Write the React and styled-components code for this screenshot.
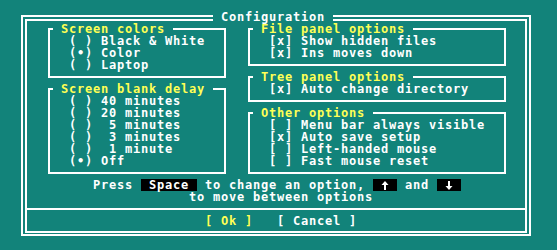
import styled, { createGlobalStyle } from 'styled-components';

const TEAL = '#12837a';
const YELLOW = '#ffff55';

const GlobalStyle = createGlobalStyle`
  html, body {
    margin: 0;
    padding: 0;
    background: ${TEAL};
  }
  body {
    width: 557px;
    height: 250px;
    overflow: hidden;
  }
`;

const Screen = styled.div`
  width: 557px;
  height: 250px;
  box-sizing: border-box;
  padding: 11px 0 0 21px;
  font-family: "DejaVu Sans Mono", "Liberation Mono", monospace;
  font-weight: bold;
  font-size: 12px;
  letter-spacing: 0.775px;
  line-height: 12px;
  color: #fff;
`;

const Dialog = styled.fieldset`
  margin: 0;
  padding: 0;
  min-width: 0;
  width: 510px;
  box-sizing: border-box;
  border: 6px double #fff;
  border-bottom-width: 5px;
`;

const DialogTitle = styled.legend`
  margin-left: 186px;
  padding: 0 8px 2px;
  line-height: 12px;
  white-space: pre;
`;

const DialogBody = styled.div`
  margin-top: -2px;
  padding-bottom: 4px;
`;

const Panels = styled.div`
  display: flex;
  gap: 22px;
  padding: 0 19px 0 21px;
`;

const Column = styled.div`
  display: flex;
  flex-direction: column;
  gap: 5px;
  width: ${p => p.$width}px;
`;

const Box = styled.fieldset`
  margin: 0;
  padding: 0;
  min-width: 0;
  box-sizing: border-box;
  border: 2px solid #fff;
`;

const BoxTitle = styled.legend`
  margin-left: 3px;
  padding: 0 8px;
  line-height: 12px;
  color: ${YELLOW};
  white-space: pre;
`;

const BoxBody = styled.div`
  padding: 0 0 5px 19px;
`;

const Line = styled.div`
  height: 12px;
  white-space: pre;
`;

const Hints = styled.div`
  margin-top: 5px;
`;

const Hint = styled.div`
  display: flex;
  align-items: flex-start;
  height: 12px;
  padding-left: ${p => p.$indent}px;
  white-space: pre;
`;

const Key = styled.span`
  display: inline-flex;
  align-items: center;
  justify-content: center;
  height: 12px;
  min-width: ${p => (p.$cols ? p.$cols * 8 : 0)}px;
  background: #000;
  color: #fff;
`;

const Divider = styled.div`
  margin: 5px 0;
  border-top: 2px solid #fff;
`;

const Buttons = styled.div`
  display: flex;
  gap: 24px;
  height: 12px;
  padding-left: 178px;
`;

const Button = styled.span`
  white-space: pre;
  color: ${p => (p.$default ? YELLOW : '#fff')};
`;

const leftBoxes = [
  {
    title: 'Screen colors',
    kind: 'radio',
    items: [['Black & White', false], ['Color', true], ['Laptop', false]],
  },
  {
    title: 'Screen blank delay',
    kind: 'radio',
    items: [
      ['40 minutes', false],
      ['20 minutes', false],
      [' 5 minutes', false],
      [' 3 minutes', false],
      [' 1 minute', false],
      ['Off', true],
    ],
  },
];

const rightBoxes = [
  {
    title: 'File panel options',
    kind: 'check',
    items: [['Show hidden files', true], ['Ins moves down', true]],
  },
  {
    title: 'Tree panel options',
    kind: 'check',
    items: [['Auto change directory', true]],
  },
  {
    title: 'Other options',
    kind: 'check',
    items: [
      ['Menu bar always visible', false],
      ['Auto save setup', true],
      ['Left-handed mouse', false],
      ['Fast mouse reset', false],
    ],
  },
];

function mark(kind, on) {
  if (kind === 'radio') return on ? '(•)' : '( )';
  return on ? '[x]' : '[ ]';
}

function OptionBox({ box }) {
  return (
    <Box>
      <BoxTitle>{box.title}</BoxTitle>
      <BoxBody>
        {box.items.map(([label, on]) => (
          <Line key={label}>{`${mark(box.kind, on)} ${label}`}</Line>
        ))}
      </BoxBody>
    </Box>
  );
}

// block arrow as drawn by the DOS font
function ArrowKey({ down }) {
  return (
    <Key $cols={3}>
      <svg width="8" height="9" viewBox="0 0 8 9" style={down ? { transform: 'rotate(180deg)' } : undefined}>
        <path d="M4 0 L7.5 4 L5 4 L5 9 L3 9 L3 4 L0.5 4 Z" fill="#fff" />
      </svg>
    </Key>
  );
}

export default function App() {
  return (
    <Screen>
      <GlobalStyle />
      <Dialog>
        <DialogTitle>Configuration</DialogTitle>
        <DialogBody>
          <Panels>
            <Column $width={178}>
              {leftBoxes.map(b => <OptionBox key={b.title} box={b} />)}
            </Column>
            <Column $width={258}>
              {rightBoxes.map(b => <OptionBox key={b.title} box={b} />)}
            </Column>
          </Panels>
          <Hints>
            <Hint $indent={66}>
              {'Press '}<Key> Space </Key>{' to change an option, '}<ArrowKey />{' and '}<ArrowKey down />
            </Hint>
            <Hint $indent={162}>to move between options</Hint>
          </Hints>
          <Divider />
          <Buttons>
            <Button $default>[ Ok ]</Button>
            <Button>[ Cancel ]</Button>
          </Buttons>
        </DialogBody>
      </Dialog>
    </Screen>
  );
}
